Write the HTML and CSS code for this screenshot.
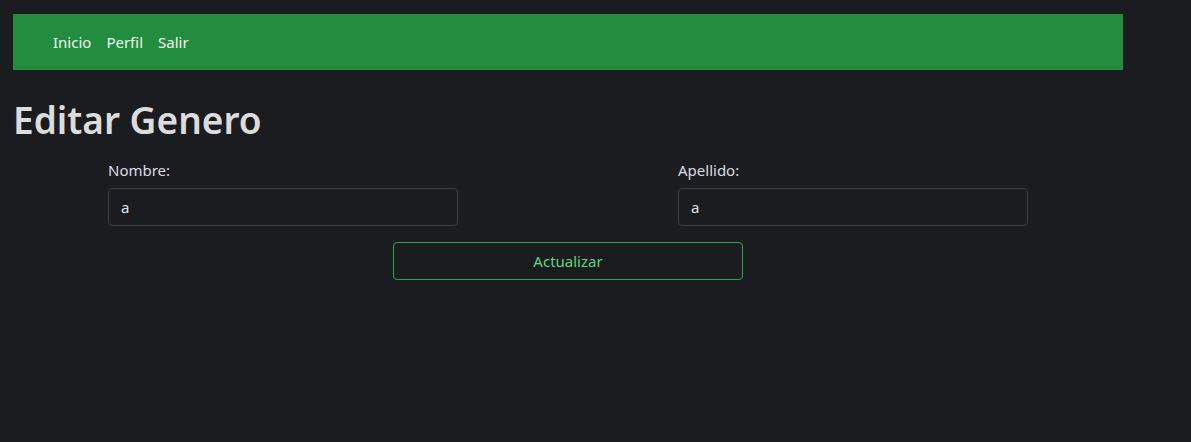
FILE: index.html
```html
<!DOCTYPE html>
<html lang="es">
<head>
<meta charset="utf-8">
<title>Editar Genero</title>
<link rel="stylesheet" href="styles.css">
</head>
<body>
<div class="container">
  <nav class="navbar">
    <a class="nav-link" href="#">Inicio</a>
    <a class="nav-link" href="#">Perfil</a>
    <a class="nav-link" href="#">Salir</a>
  </nav>
  <h1 class="title">Editar Genero</h1>
  <form class="form">
    <div class="fields">
      <div class="field">
        <label class="label" for="nombre">Nombre:</label>
        <input class="input" id="nombre" type="text" value="a">
      </div>
      <div class="field">
        <label class="label" for="apellido">Apellido:</label>
        <input class="input" id="apellido" type="text" value="a">
      </div>
    </div>
    <button class="btn" type="button">Actualizar</button>
  </form>
</div>
</body>
</html>
```
FILE: styles.css
```css
html, body {
  margin: 0;
  padding: 0;
  background: #1b1c1f;
}
body {
  font-family: "Noto Sans", "Open Sans", sans-serif;
  font-size: 15px;
  color: #dee2e6;
}
.container {
  width: 1110px;
  padding: 14px 0 0 13px;
}
.navbar {
  display: flex;
  align-items: center;
  gap: 15px;
  height: 56px;
  padding-left: 40px;
  background: #238d3f;
}
.nav-link {
  color: #f1f4f2;
  text-decoration: none;
  font-size: 15px;
}
.title {
  margin: 26px 0 0 0;
  font-size: 37px;
  font-weight: 600;
  line-height: 48px;
  color: #dcdcdc;
}
.form {
  display: flex;
  flex-direction: column;
  align-items: center;
  margin-top: 16px;
}
.fields {
  display: grid;
  grid-template-columns: 350px 350px;
  column-gap: 220px;
}
.field {
  display: flex;
  flex-direction: column;
}
.label {
  font-size: 15px;
  line-height: 20px;
  margin-bottom: 8px;
  color: #dcdde0;
}
.input {
  box-sizing: border-box;
  width: 350px;
  height: 38px;
  padding: 0 12px;
  background: #1b1c1f;
  border: 1px solid #3b4047;
  border-radius: 4px;
  color: #dee2e6;
  font-family: inherit;
  font-size: 15px;
  outline: none;
}
.btn {
  box-sizing: border-box;
  width: 350px;
  height: 38px;
  margin-top: 16px;
  background: transparent;
  border: 1px solid #28a745;
  border-radius: 4px;
  color: #5fd57c;
  font-family: inherit;
  font-size: 15px;
}
```
